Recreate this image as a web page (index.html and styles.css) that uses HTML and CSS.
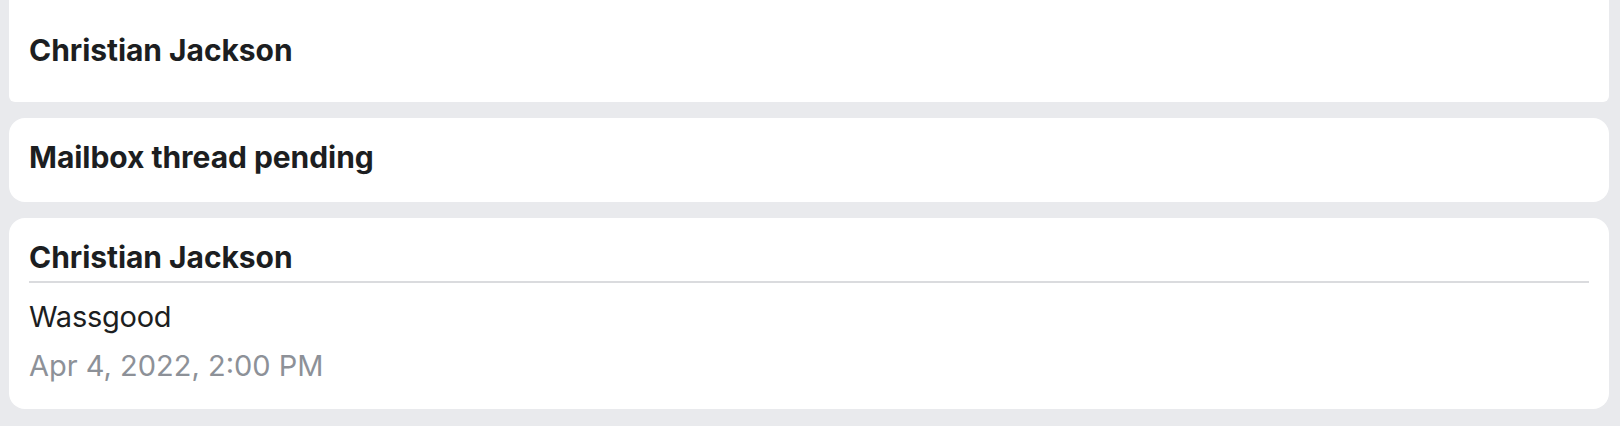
FILE: index.html
```html
<!DOCTYPE html>
<html lang="en">
<head>
<meta charset="utf-8">
<title>Thread</title>
<link rel="stylesheet" href="styles.css">
</head>
<body>
  <main class="feed">
    <section class="card card-top">
      <h2 class="title">Christian Jackson</h2>
    </section>
    <section class="card card-status">
      <h2 class="title">Mailbox thread pending</h2>
    </section>
    <section class="card card-message">
      <h2 class="title title-divided">Christian Jackson</h2>
      <p class="message">Wassgood</p>
      <p class="timestamp">Apr 4, 2022, 2:00 PM</p>
    </section>
  </main>
</body>
</html>
```

FILE: styles.css
```css
* {
  box-sizing: border-box;
}

html, body {
  margin: 0;
  padding: 0;
}

body {
  background: #e9eaed;
  font-family: Inter, "Noto Sans", "Liberation Sans", sans-serif;
  color: #1c1e21;
  width: 1620px;
  height: 426px;
  overflow: hidden;
}

.feed {
  display: flex;
  flex-direction: column;
  gap: 16px;
  padding: 0 11px 0 9px;
}

.card {
  background: #ffffff;
  border-radius: 16px;
  padding: 21px 20px 0 20px;
}

.card-top {
  border-radius: 0 0 6px 6px;
  height: 102px;
  padding-top: 32px;
}

.card-status {
  height: 84px;
}

.card-message {
  height: 191px;
  padding-top: 21px;
}

.title {
  margin: 0;
  font-size: 30px;
  line-height: 36px;
  font-weight: 700;
  letter-spacing: -0.05px;
  color: #1c1e21;
}

.title-divided {
  padding-bottom: 6px;
  border-bottom: 2px solid #dadbde;
}

.message {
  margin: 16px 0 0 0;
  font-size: 29px;
  line-height: 36px;
  font-weight: 400;
  letter-spacing: -0.25px;
  color: #1c1e21;
}

.timestamp {
  margin: 13px 0 0 0;
  font-size: 29px;
  line-height: 36px;
  font-weight: 400;
  letter-spacing: 0;
  color: #8d9198;
}
```
